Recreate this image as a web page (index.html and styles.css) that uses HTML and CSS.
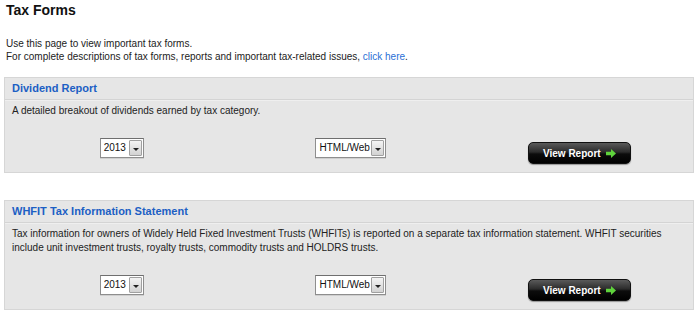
FILE: index.html
```html
<!DOCTYPE html>
<html lang="en">
<head>
    <meta charset="UTF-8">
    <meta name="viewport" content="width=device-width, initial-scale=1.0">
    <title>Tax Forms</title>
    <link rel="stylesheet" href="styles.css">
</head>
<body>
    <div class="page">
        <h1 class="page-title">Tax Forms</h1>
        <p class="intro">
            Use this page to view important tax forms.<br>
            For complete descriptions of tax forms, reports and important tax-related issues, <a href="#">click here</a>.
        </p>

        <div class="report-box">
            <h2 class="report-title">Dividend Report</h2>
            <div class="report-body">
                <p class="report-desc">A detailed breakout of dividends earned by tax category.</p>
                <div class="report-options">
                    <div class="option">
                        <div class="fake-select year"><span class="select-value">2013</span><span class="select-arrow"></span></div>
                    </div>
                    <div class="option">
                        <div class="fake-select format"><span class="select-value">HTML/Web</span><span class="select-arrow"></span></div>
                    </div>
                    <div class="option">
                        <button class="view-button">View Report
                            <svg class="arrow" viewBox="0 0 10 9" width="10" height="9"><path d="M0 2.8h5V0l5 4.5L5 9V6.2H0z"/></svg>
                        </button>
                    </div>
                </div>
            </div>
        </div>

        <div class="report-box">
            <h2 class="report-title">WHFIT Tax Information Statement</h2>
            <div class="report-body">
                <p class="report-desc">Tax information for owners of Widely Held Fixed Investment Trusts (WHFITs) is reported on a separate tax information statement. WHFIT securities include unit investment trusts, royalty trusts, commodity trusts and HOLDRS trusts.</p>
                <div class="report-options">
                    <div class="option">
                        <div class="fake-select year"><span class="select-value">2013</span><span class="select-arrow"></span></div>
                    </div>
                    <div class="option">
                        <div class="fake-select format"><span class="select-value">HTML/Web</span><span class="select-arrow"></span></div>
                    </div>
                    <div class="option">
                        <button class="view-button">View Report
                            <svg class="arrow" viewBox="0 0 10 9" width="10" height="9"><path d="M0 2.8h5V0l5 4.5L5 9V6.2H0z"/></svg>
                        </button>
                    </div>
                </div>
            </div>
        </div>
    </div>
</body>
</html>
```

FILE: styles.css
```css
:root {
    --text-color: #222;
    --link-color: #2a6fd6;
    --title-color: #1c5fc4;
    --box-bg: #e6e6e6;
    --box-border: #d6d6d6;
}

* {
    margin: 0;
    padding: 0;
    box-sizing: border-box;
}

body {
    font-family: "Liberation Sans", Arial, sans-serif;
    font-size: 10px;
    color: var(--text-color);
    background: white;
}

.page {
    padding: 1px 6px 0 4px;
}

.page-title {
    font-size: 14px;
    font-weight: bold;
    color: #111;
    line-height: 18px;
    padding-left: 2px;
}

.intro {
    line-height: 13px;
    margin-top: 18px;
    padding-left: 2px;
}

.intro a {
    color: var(--link-color);
    text-decoration: none;
}

.report-box {
    background: var(--box-bg);
    border: 1px solid var(--box-border);
    margin-top: 14px;
}

.report-box + .report-box {
    margin-top: 27px;
}

.report-title {
    font-size: 11px;
    font-weight: bold;
    color: var(--title-color);
    line-height: 21px;
    padding-left: 7px;
    border-bottom: 1px solid #d4d4d4;
    box-shadow: 0 1px 0 #efefef;
}

.report-body {
    padding: 4px 20px 8px 7px;
}

.report-desc {
    line-height: 14px;
}

.report-options {
    display: grid;
    grid-template-columns: 1fr 1fr 1fr;
    margin-top: 20px;
    margin-left: -7px;
    margin-right: -20px;
    align-items: start;
}

.option {
    display: flex;
    justify-content: center;
}

.fake-select {
    display: flex;
    align-items: stretch;
    height: 20px;
    background: white;
    border: 1px solid #8e8e8e;
    border-top-color: #6f6f6f;
    box-shadow: 0 1px 0 #cfcfcf;
}

.fake-select.year {
    width: 44px;
    margin-left: 4px;
}

.fake-select.format {
    width: 71px;
    margin-left: 4px;
}

.select-value {
    flex: 1;
    font-size: 10px;
    line-height: 18px;
    padding-left: 3px;
    color: #111;
}

.select-arrow {
    width: 13px;
    margin: 1px;
    border: 1px solid #a0a0a0;
    border-radius: 1px;
    background: linear-gradient(#f4f4f4, #d2d2d2);
    position: relative;
}

.select-arrow::after {
    content: "";
    position: absolute;
    left: 3px;
    top: 7px;
    border-left: 3px solid transparent;
    border-right: 3px solid transparent;
    border-top: 3px solid #222;
}

.view-button {
    margin-top: 4px;
    width: 103px;
    height: 22px;
    border: 1px solid #111;
    border-radius: 5px;
    background: linear-gradient(#5a5a5a 0%, #2b2b2b 45%, #0c0c0c 55%, #000 100%);
    box-shadow: 0 1px 1px rgba(0, 0, 0, 0.35);
    color: white;
    font-family: "Liberation Sans", Arial, sans-serif;
    font-size: 10px;
    font-weight: bold;
    cursor: pointer;
    display: flex;
    align-items: center;
    justify-content: center;
    gap: 5px;
    margin-left: 2px;
}

.view-button .arrow {
    fill: #5fd33c;
}
```
